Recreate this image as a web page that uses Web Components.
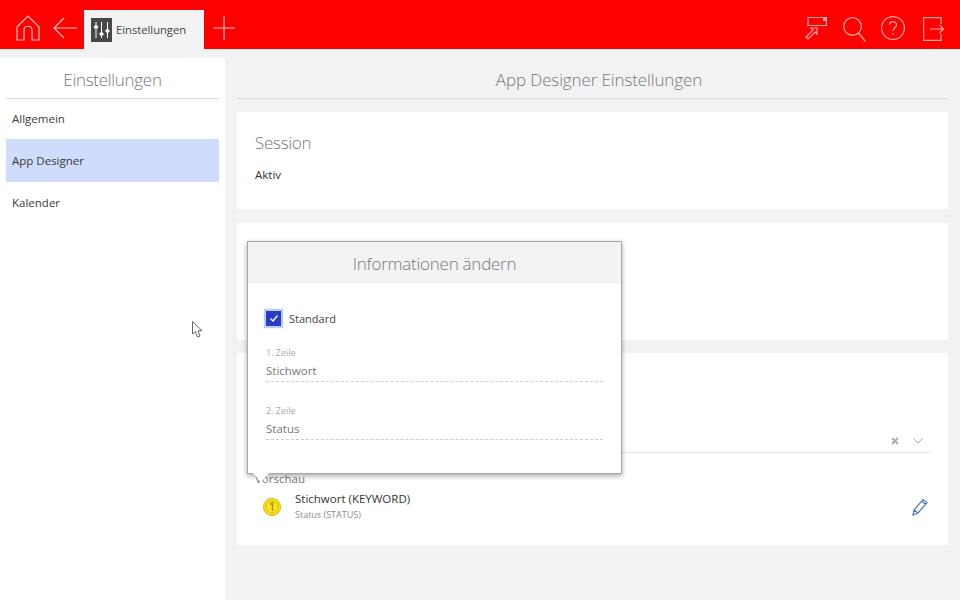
<!DOCTYPE html>
<html lang="de">
<head>
<meta charset="utf-8">
<title>App Designer Einstellungen</title>
<style>
    html, body { margin: 0; height: 100%; }
    body {
        width: 960px;
        height: 600px;
        overflow: hidden;
        position: relative;
        background: #f2f2f4;
        color: #333;
        font-family: "Open Sans", "Noto Sans", sans-serif;
        font-size: 11.5px;
    }
    .cursor { position: absolute; left: 192px; top: 321px; }
</style>
</head>
<body>
<app-header></app-header>
<app-page>
    <side-nav slot="nav"></side-nav>
    <settings-panel slot="main"></settings-panel>
</app-page>
<info-dialog></info-dialog>
<svg class="cursor" width="11" height="18" viewBox="0 0 11 18">
    <path d="M.5.5V13L3.4 10.6 5.4 16 8 15 6 9.8H10Z" fill="#fff" stroke="#66666e" stroke-width="1"/>
</svg>

<script>
class AppHeader extends HTMLElement {
    constructor() {
        super()
        this.shadowDOM = this.attachShadow({mode: "open"})
    }

    connectedCallback() {
        this.shadowDOM.innerHTML = `
            <style>
                :host {
                    display: flex;
                    align-items: flex-end;
                    height: 49px;
                    background: #fe0000;
                    box-sizing: border-box;
                }
                svg { display: block; fill: none; stroke: #ffa8a8; stroke-width: 1.2; }
                .left { display: flex; align-items: flex-end; height: 100%; flex: 1; }
                .left > svg { stroke: #ffc4c4; }
                .home { margin: 0 0 8px 16px; }
                .back { margin: 0 0 10px 13px; }
                .tab {
                    display: flex;
                    align-items: center;
                    width: 120px;
                    height: 39px;
                    margin-left: 7px;
                    padding-left: 7px;
                    box-sizing: border-box;
                    background: #f3f3f5;
                    color: #444;
                    font-size: 11.2px;
                }
                .tab-icon {
                    width: 21px;
                    height: 24px;
                    margin-right: 4px;
                    background: #48484c;
                }
                .tab-icon svg { stroke: #fff; stroke-width: 1; }
                .plus { margin: 0 0 9px 9px; }
                .right { display: flex; align-items: flex-end; height: 100%; }
            </style>
            <div class="left">
                <svg class="home" width="24" height="26" viewBox="0 0 24 26">
                    <path d="M1 12 12 1 23 12V25H16V15C16 10 8 10 8 15V25H1Z"/>
                </svg>
                <svg class="back" width="24" height="22" viewBox="0 0 24 22">
                    <path d="M24 11H1M11 1 1 11 11 21"/>
                </svg>
                <div class="tab">
                    <div class="tab-icon">
                        <svg width="21" height="24" viewBox="0 0 21 24">
                            <path d="M5 4V20M10.500 4V20M16.500 4V20"/>
                            <path d="M3.500 8H6.500V10H3.500ZM9 15H12V17H9ZM15 12H18V14H15Z" fill="#fff"/>
                        </svg>
                    </div>
                    Einstellungen
                </div>
                <svg class="plus" width="22" height="24" viewBox="0 0 22 24">
                    <path d="M11 0V24M0 12H22"/>
                </svg>
            </div>
            <div class="right">
                <svg style="margin-bottom:9px" width="22" height="23" viewBox="0 0 22 23">
                    <path d="M3 .500H21.500V8.500H3Z"/>
                    <path d="M18 1H21V4H18Z" fill="#ffa8a8" stroke="none"/>
                    <path d="M6 11H12V17L10 15 3 22 1 20 8 13Z"/>
                </svg>
                <svg style="margin:0 0 7px 16px" width="23" height="25" viewBox="0 0 23 25">
                    <circle cx="9.500" cy="9.500" r="8.800"/>
                    <path d="M15.500 16 22.500 24.500"/>
                </svg>
                <svg style="margin:0 0 9px 15px" width="24" height="24" viewBox="0 0 24 24">
                    <circle cx="12" cy="12" r="11.400"/>
                    <path d="M8.500 9C8.500 4.500 15.500 4.500 15.500 9 15.500 11.500 12 11.500 12 15M12 17V19"/>
                </svg>
                <svg style="margin:0 16px 8px 18px" width="21" height="24" viewBox="0 0 21 24">
                    <path d="M18 7V.600H.600V23.400H18V17M7 12H20.500M16.500 8 20.500 12 16.500 16"/>
                </svg>
            </div>
        `;
    }
}

class AppPage extends HTMLElement {
    constructor() {
        super()
        this.attachShadow({mode: "open"}).innerHTML = `
            <style>
                :host {
                    display: grid;
                    grid-template-columns: 225px 1fr;
                    height: 551px;
                }
                .nav { padding-top: 9px; }
                .nav ::slotted(*) { height: 100%; }
            </style>
            <div class="nav"><slot name="nav"></slot></div>
            <slot name="main"></slot>
        `;
    }
}

class SideNav extends HTMLElement {
    constructor() {
        super()
        this.attachShadow({mode: "open"}).innerHTML = `
            <style>
                :host {
                    display: block;
                    box-sizing: border-box;
                    background: #fff;
                    padding: 0 6px;
                }
                h2 {
                    margin: 0;
                    height: 40px;
                    line-height: 44px;
                    border-bottom: 1px solid #dedee0;
                    font-size: 17px;
                    letter-spacing: -.3px;
                    font-weight: 300;
                    color: #77777b;
                    text-align: center;
                }
                .item {
                    height: 42px;
                    line-height: 42px;
                    padding-left: 6px;
                    color: #3a3a3a;
                }
                .first { height: 40px; line-height: 40px; }
                .active { height: 43px; line-height: 43px; background: #cfdcfb; }
            </style>
            <h2>Einstellungen</h2>
            <div class="item first">Allgemein</div>
            <div class="item active">App Designer</div>
            <div class="item">Kalender</div>
        `;
    }
}

class SettingsCard extends HTMLElement {
    constructor() {
        super()
        this.attachShadow({mode: "open"}).innerHTML = `
            <style>
                :host {
                    display: block;
                    box-sizing: border-box;
                    background: #fff;
                    padding: 19px 18px 0;
                }
            </style>
            <slot></slot>
        `;
    }
}

class SettingsPanel extends HTMLElement {
    constructor() {
        super()
        this.attachShadow({mode: "open"}).innerHTML = `
            <style>
                :host {
                    display: block;
                    padding: 9px 12px 0;
                }
                h1 {
                    margin: 0 0 13px;
                    height: 40px;
                    padding-left: 13px;
                    line-height: 44px;
                    border-bottom: 1px solid #dcdcde;
                    font-size: 17px;
                    letter-spacing: -.12px;
                    font-weight: 300;
                    color: #77777b;
                    text-align: center;
                }
                settings-card { margin-bottom: 13px; }
                settings-card:first-of-type { margin-bottom: 14px; }
                h3 {
                    margin: 0;
                    font-size: 17px;
                    letter-spacing: -.3px;
                    line-height: 24px;
                    font-weight: 300;
                    color: #77777b;
                }
                .value { margin-top: 11px; line-height: 17px; color: #333; }
                .select {
                    display: flex;
                    justify-content: flex-end;
                    align-items: center;
                    gap: 14px;
                    height: 22px;
                    margin-top: 58px;
                    border-bottom: 1px solid #e2e2e4;
                    padding-right: 7px;
                }
                .select svg { fill: none; stroke: #a9a9ad; }
                .caption { margin-top: 17px; line-height: 17px; color: #77777b; }
                .preview { display: flex; align-items: center; margin-top: 3px; padding-right: 2px; }
                .coin { margin: 0 14px 0 8px; }
                .text { flex: 1; }
                .line1 { line-height: 17px; color: #333; }
                .line2 { line-height: 16px; font-size: 9px; color: #8b8b8f; }
                .edit { fill: none; stroke: #4d78c9; stroke-width: 1.2; }
            </style>
            <h1>App Designer Einstellungen</h1>
            <settings-card style="height:97px">
                <h3>Session</h3>
                <div class="value">Aktiv</div>
            </settings-card>
            <settings-card style="height:117px"></settings-card>
            <settings-card style="height:192px">
                <div class="select">
                    <svg width="8" height="8" viewBox="0 0 8 8" style="stroke-width:1.800"><path d="M1 1 7 7M7 1 1 7"/></svg>
                    <svg width="10" height="6" viewBox="0 0 10 6"><path d="M.5.5 5 5 9.500.5"/></svg>
                </div>
                <div class="caption">Vorschau</div>
                <div class="preview">
                    <svg class="coin" width="18" height="18" viewBox="0 0 18 18">
                        <circle cx="9" cy="9" r="8.500" fill="#f8e01a" stroke="#dcb800"/>
                        <circle cx="9" cy="9" r="5.800" fill="#fbe62a" stroke="#dcb800" stroke-width=".8"/>
                        <path d="M7 6.500 9.500 5V13" fill="none" stroke="#b89600" stroke-width="1.600"/>
                    </svg>
                    <div class="text">
                        <div class="line1">Stichwort (KEYWORD)</div>
                        <div class="line2">Status (STATUS)</div>
                    </div>
                    <svg class="edit" width="16" height="18" viewBox="0 0 16 18">
                        <path d="M1 17 2 12 11 1.500 15 4.500 6 15ZM2 12 6 15M9.500 3.200 13.500 6.200"/>
                    </svg>
                </div>
            </settings-card>
        `;
    }
}

class InfoDialog extends HTMLElement {
    constructor() {
        super()
        this.attachShadow({mode: "open"}).innerHTML = `
            <style>
                :host {
                    position: absolute;
                    left: 247px;
                    top: 241px;
                    width: 375px;
                    height: 233px;
                    box-sizing: border-box;
                    background: #fff;
                    border: 1px solid #a8a8aa;
                    box-shadow: 0 2px 5px rgba(0, 0, 0, .35);
                }
                .tail {
                    position: absolute;
                    left: 5px;
                    bottom: -9px;
                    display: block;
                    fill: #fff;
                }
                h2 {
                    margin: 0;
                    height: 40px;
                    line-height: 44px;
                    background: #f3f3f4;
                    border-bottom: 1px solid #ebebed;
                    font-size: 17px;
                    letter-spacing: -.25px;
                    font-weight: 300;
                    color: #77777b;
                    text-align: center;
                }
                .body { padding: 25px 18px 0; }
                .check { display: flex; align-items: center; gap: 8px; height: 20px; color: #444; font-size: 11px; }
                .box {
                    width: 15px;
                    height: 15px;
                    background: #2a3cc0;
                    box-shadow: 0 0 1px 2px #b9cdf5;
                    display: flex;
                    align-items: center;
                    justify-content: center;
                }
                .box svg { fill: none; stroke: #fff; stroke-width: 1.300; }
                .field { border-bottom: 1px dashed #cfcfd3; height: 35px; }
                .check + .field { margin-top: 18px; }
                .field + .field { margin-top: 22px; }
                .label { font-size: 9px; line-height: 14px; color: #aaaaae; }
                .val { line-height: 21px; color: #77777b; }
            </style>
            <h2>Informationen ändern</h2>
            <div class="body">
                <div class="check">
                    <div class="box"><svg width="8" height="7" viewBox="0 0 8 7"><path d="M.5 3.500 3 6 7.500.5"/></svg></div>
                    Standard
                </div>
                <div class="field">
                    <div class="label">1. Zeile</div>
                    <div class="val">Stichwort</div>
                </div>
                <div class="field">
                    <div class="label">2. Zeile</div>
                    <div class="val">Status</div>
                </div>
            </div>
            <svg class="tail" width="16" height="9" viewBox="0 0 16 9"><path d="M0 0H16L8 9Z"/></svg>
        `;
    }
}

customElements.define('app-header', AppHeader);
customElements.define('app-page', AppPage);
customElements.define('side-nav', SideNav);
customElements.define('settings-card', SettingsCard);
customElements.define('settings-panel', SettingsPanel);
customElements.define('info-dialog', InfoDialog);
</script>
</body>
</html>
